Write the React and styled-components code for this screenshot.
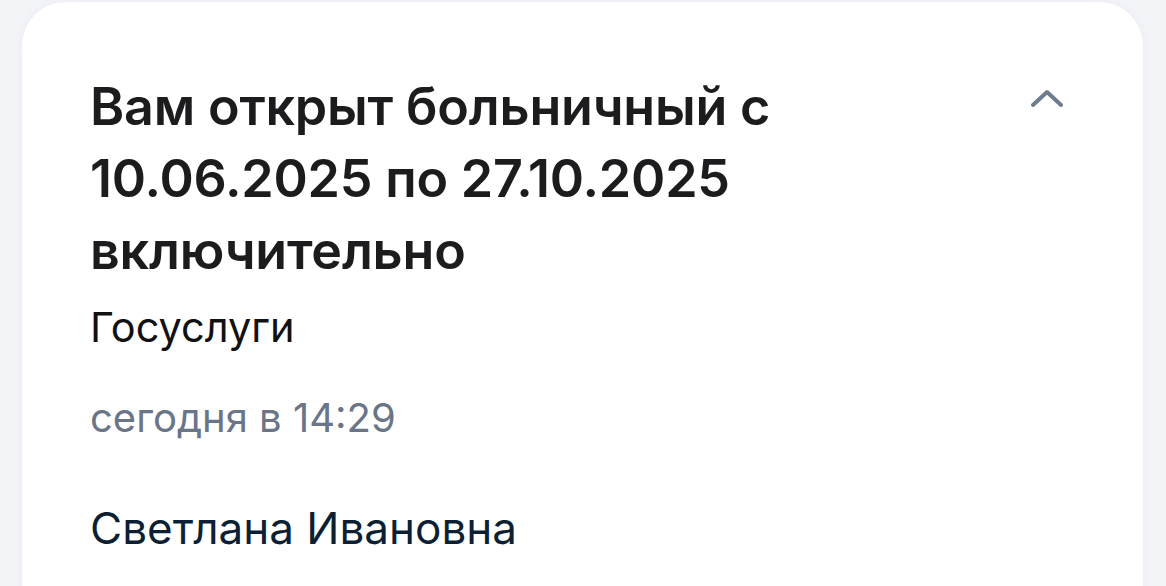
import styled, { createGlobalStyle } from "styled-components";

const GlobalStyle = createGlobalStyle`
    html, body {
        margin: 0;
        padding: 0;
        background: #f3f4f8;
        font-family: Inter, "Noto Sans", sans-serif;
        -webkit-font-smoothing: antialiased;
    }
`

const Page = styled.div`
    width: 1166px;
    height: 586px;
    overflow: hidden;
    padding: 2px 23px 0 22px;
    box-sizing: border-box;
`

const Card = styled.div`
    background: #ffffff;
    border-radius: 44px;
    padding: 69px 80px 60px 68px;
    min-height: 700px;
    box-shadow: 0 0 12px rgba(40, 50, 90, 0.04);
`

const Header = styled.div`
    display: flex;
    justify-content: space-between;
    align-items: flex-start;
`

const Title = styled.h1`
    margin: 0;
    max-width: 720px;
    font-size: 52px;
    line-height: 72px;
    font-weight: 600;
    color: #1c1c1e;
    letter-spacing: -0.2px;
`

const Toggle = styled.button`
    border: none;
    background: none;
    padding: 0;
    margin-top: 14px;
    width: 32px;
    height: 24px;
    cursor: pointer;
    color: #6e7c8f;
`

const Text = styled.div`
    margin-top: ${(p) => p.gap}px;
    font-size: ${(p) => p.size}px;
    line-height: ${(p) => p.lh}px;
    color: ${(p) => p.color};
    font-weight: 400;
`

const Chevron = () => (
    <svg width="32" height="24" viewBox="0 0 32 24" fill="none">
        <path d="M2 20 L16 7 L30 20" stroke="currentColor" strokeWidth="4" strokeLinecap="round" strokeLinejoin="round" />
    </svg>
)

const App = () => {
    return (
        <>
            <GlobalStyle />
            <Page>
                <Card>
                    <Header>
                        <Title>Вам открыт больничный с 10.06.2025 по 27.10.2025 включительно</Title>
                        <Toggle aria-label="Свернуть">
                            <Chevron />
                        </Toggle>
                    </Header>
                    <Text gap={16} size={41.5} lh={48} color="#111111">Госуслуги</Text>
                    <Text gap={43} size={40} lh={48} color="#6a7587">сегодня в 14:29</Text>
                    <Text gap={60} size={44} lh={52} color="#0d1f33">Светлана Ивановна</Text>
                </Card>
            </Page>
        </>
    )
}

export default App
